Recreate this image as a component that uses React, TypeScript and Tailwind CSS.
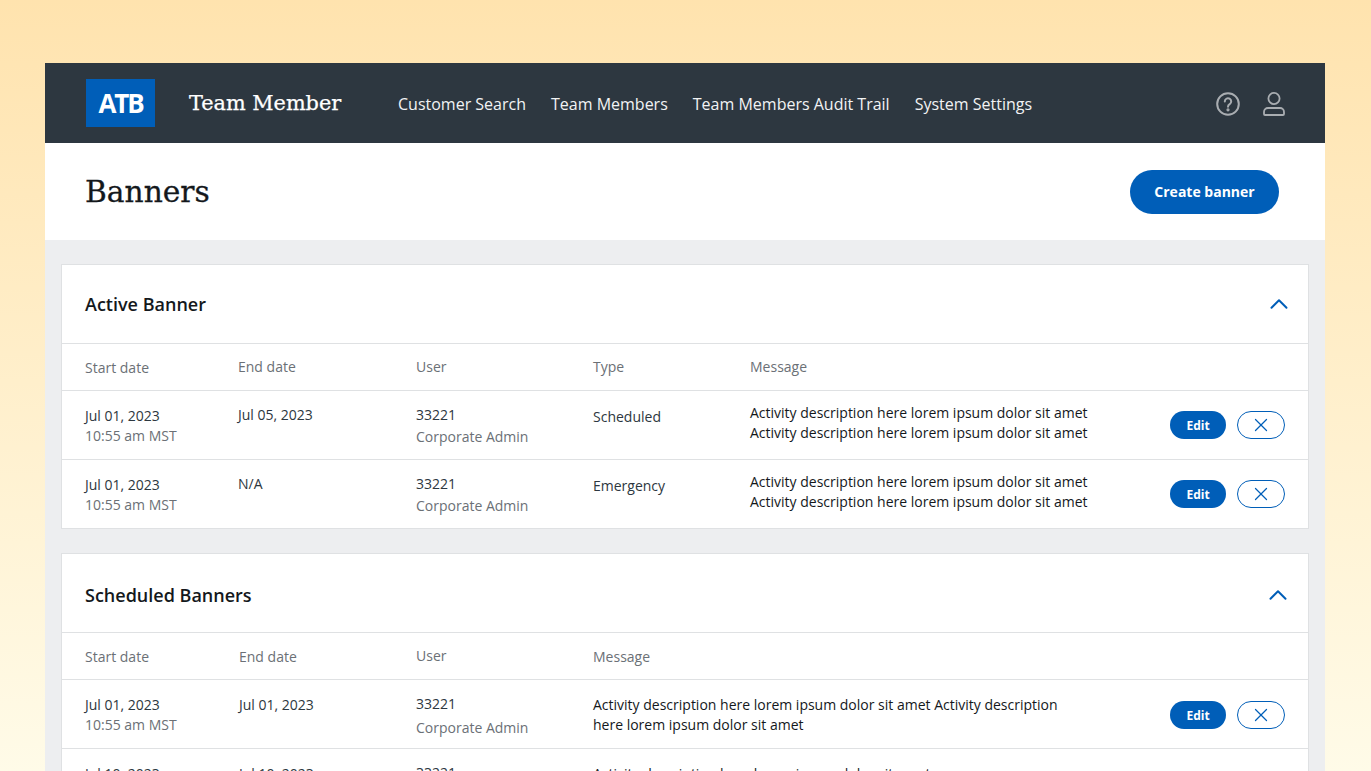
import { ChevronUp, X } from "lucide-react";

// Banner admin page: nav, title bar and two collapsible tables
const activeCols = "grid grid-cols-[153px_178px_177px_157px_1fr_auto] pl-[23px] pr-[23px]";
const scheduledCols = "grid grid-cols-[154px_177px_177px_1fr_auto] pl-[23px] pr-[23px]";

type Label = { text: string; raised?: boolean };

function Head({ cols, labels }: { cols: string; labels: Label[] }) {
  return (
    <div className={cols + " h-[47px] items-center border-b border-[#dfe1e3] text-[14px] text-[#6b7076]"}>
      {labels.map((l) => (
        <div key={l.text} className={l.raised ? "mb-[2px]" : ""}>
          {l.text}
        </div>
      ))}
    </div>
  );
}

function DateCell({ date, time }: { date: string; time?: string }) {
  return (
    <div className="pt-[15px] leading-[20px]">
      <div className="text-[#2d3740]">{date}</div>
      {time && <div className="text-[#6b7076]">{time}</div>}
    </div>
  );
}

function UserCell({ spacing }: { spacing: string }) {
  return (
    <div className={spacing}>
      <div className="text-[#2d3740]">33221</div>
      <div className="text-[#6b7076]">Corporate Admin</div>
    </div>
  );
}

function Actions({ className = "" }: { className?: string }) {
  return (
    <div className={"flex items-center gap-[11px] self-center " + className}>
      <button className="h-[28px] w-[56px] rounded-full bg-[#005eb8] pt-[2px] text-[12px] font-bold text-white">Edit</button>
      <button className="flex h-[28px] w-[48px] items-center justify-center rounded-full border border-[#005eb8] bg-white text-[#005eb8]">
        <X size={22} strokeWidth={1.35} />
      </button>
    </div>
  );
}

function ActiveRow({ end, type, last }: { end: string; type: string; last?: boolean }) {
  return (
    <div className={activeCols + (last ? " h-[68px]" : " h-[69px] border-b border-[#dfe1e3]") + " text-[14px]"}>
      <DateCell date="Jul 01, 2023" time="10:55 am MST" />
      <div className="pt-[14px] leading-[20px] text-[#2d3740]">{end}</div>
      <UserCell spacing="pt-[13px] leading-[22px]" />
      <div className="pt-[16px] leading-[20px] text-[#2d3740]">{type}</div>
      <div className="pt-[12px] leading-[20px] text-[#14181c]">
        Activity description here lorem ipsum dolor sit amet
        <br />
        Activity description here lorem ipsum dolor sit amet
      </div>
      <Actions />
    </div>
  );
}

function CardTitle({ title, className, chevronPad }: { title: string; className: string; chevronPad: string }) {
  return (
    <div className={"flex h-[79px] items-center justify-between border-b border-[#dfe1e3] pl-[23px] " + className + " " + chevronPad}>
      <h2 className="text-[18px] font-semibold text-[#14181c]">{title}</h2>
      <ChevronUp size={30} strokeWidth={1.6} className="text-[#005eb8]" />
    </div>
  );
}

export default function App() {
  const nav = ["Customer Search", "Team Members", "Team Members Audit Trail", "System Settings"];

  return (
    <div className="h-[771px] overflow-hidden bg-gradient-to-b from-[#ffe3ae] to-[#fffbe8] pl-[45px] pt-[63px] font-['Open_Sans',sans-serif]">
      <div className="w-[1280px]">
        <header className="flex h-[80px] items-center bg-[#2d3740] pl-[41px] pr-[40px]">
          <div className="flex h-[48px] w-[69px] items-center justify-center bg-[#005eb8] text-[26px] font-bold tracking-[-2.2px] text-white">
            ATB
          </div>
          <div className="ml-[34px] mt-[2px] w-[209px] font-['DejaVu_Serif',serif] text-[20.8px] text-white [-webkit-text-stroke:0.25px_white]">
            Team Member
          </div>
          <nav className="mt-[2px] flex gap-[25px] text-[16px] text-[#f2f3f4]">
            {nav.map((n) => (
              <span key={n}>{n}</span>
            ))}
          </nav>
          <div className="ml-auto mt-[2px] flex items-center gap-[23px] text-[#a9adb1]">
            <svg width="24" height="24" viewBox="0 0 24 24" fill="none" stroke="currentColor" strokeWidth="2">
              <circle cx="12" cy="12" r="10.8" />
              <path d="M8.8 9.5a3.2 3.2 0 1 1 4.9 2.7c-1.1.7-1.7 1.2-1.7 2.6" strokeLinecap="round" />
              <circle cx="12" cy="17.8" r="0.6" fill="currentColor" />
            </svg>
            <svg width="22" height="24" viewBox="0 0 22 24" fill="none" stroke="currentColor" strokeWidth="1.8">
              <circle cx="11" cy="6.5" r="5.6" />
              <path d="M5 16h12a4 4 0 0 1 4 4v2a1 1 0 0 1-1 1H2a1 1 0 0 1-1-1v-2a4 4 0 0 1 4-4z" />
            </svg>
          </div>
        </header>

        <div className="flex h-[97px] items-center justify-between bg-white pl-[40px] pr-[46px]">
          <h1 className="mt-[2px] font-['DejaVu_Serif',serif] text-[29.7px] text-[#14181c] [-webkit-text-stroke:0.3px_#14181c]">Banners</h1>
          <button className="h-[44px] w-[149px] rounded-full bg-[#005eb8] text-[14px] font-bold text-white">Create banner</button>
        </div>

        <main className="flex flex-col gap-[24px] bg-[#edeef0] px-[16px] pt-[24px]">
          <section className="border border-[#dfe1e3] bg-white">
            <CardTitle title="Active Banner" className="" chevronPad="pr-[14px]" />
            <Head
              cols={activeCols}
              labels={[
                { text: "Start date" },
                { text: "End date", raised: true },
                { text: "User", raised: true },
                { text: "Type", raised: true },
                { text: "Message", raised: true },
              ]}
            />
            <ActiveRow end="Jul 05, 2023" type="Scheduled" />
            <ActiveRow end="N/A" type="Emergency" last />
          </section>

          <section className="border border-[#dfe1e3] bg-white">
            <CardTitle title="Scheduled Banners" className="pt-[4px]" chevronPad="pr-[15px]" />
            <Head
              cols={scheduledCols}
              labels={[{ text: "Start date" }, { text: "End date" }, { text: "User", raised: true }, { text: "Message" }]}
            />
            <div className={scheduledCols + " h-[69px] border-b border-[#dfe1e3] text-[14px]"}>
              <DateCell date="Jul 01, 2023" time="10:55 am MST" />
              <DateCell date="Jul 01, 2023" />
              <UserCell spacing="pt-[12px] leading-[24px]" />
              <div className="w-[480px] pt-[15px] leading-[20px] text-[#14181c]">
                Activity description here lorem ipsum dolor sit amet Activity description here lorem ipsum dolor sit amet
              </div>
              <Actions className="mt-[2px]" />
            </div>
            <div className={scheduledCols + " h-[74px] text-[14px]"}>
              <DateCell date="Jul 10, 2023" time="10:55 am MST" />
              <DateCell date="Jul 10, 2023" />
              <UserCell spacing="pt-[12px] leading-[24px]" />
              <div className="w-[480px] pt-[15px] leading-[20px] text-[#14181c]">
                Activity description here lorem ipsum dolor sit amet
              </div>
              <Actions className="mt-[2px]" />
            </div>
          </section>
        </main>
      </div>
    </div>
  );
}
